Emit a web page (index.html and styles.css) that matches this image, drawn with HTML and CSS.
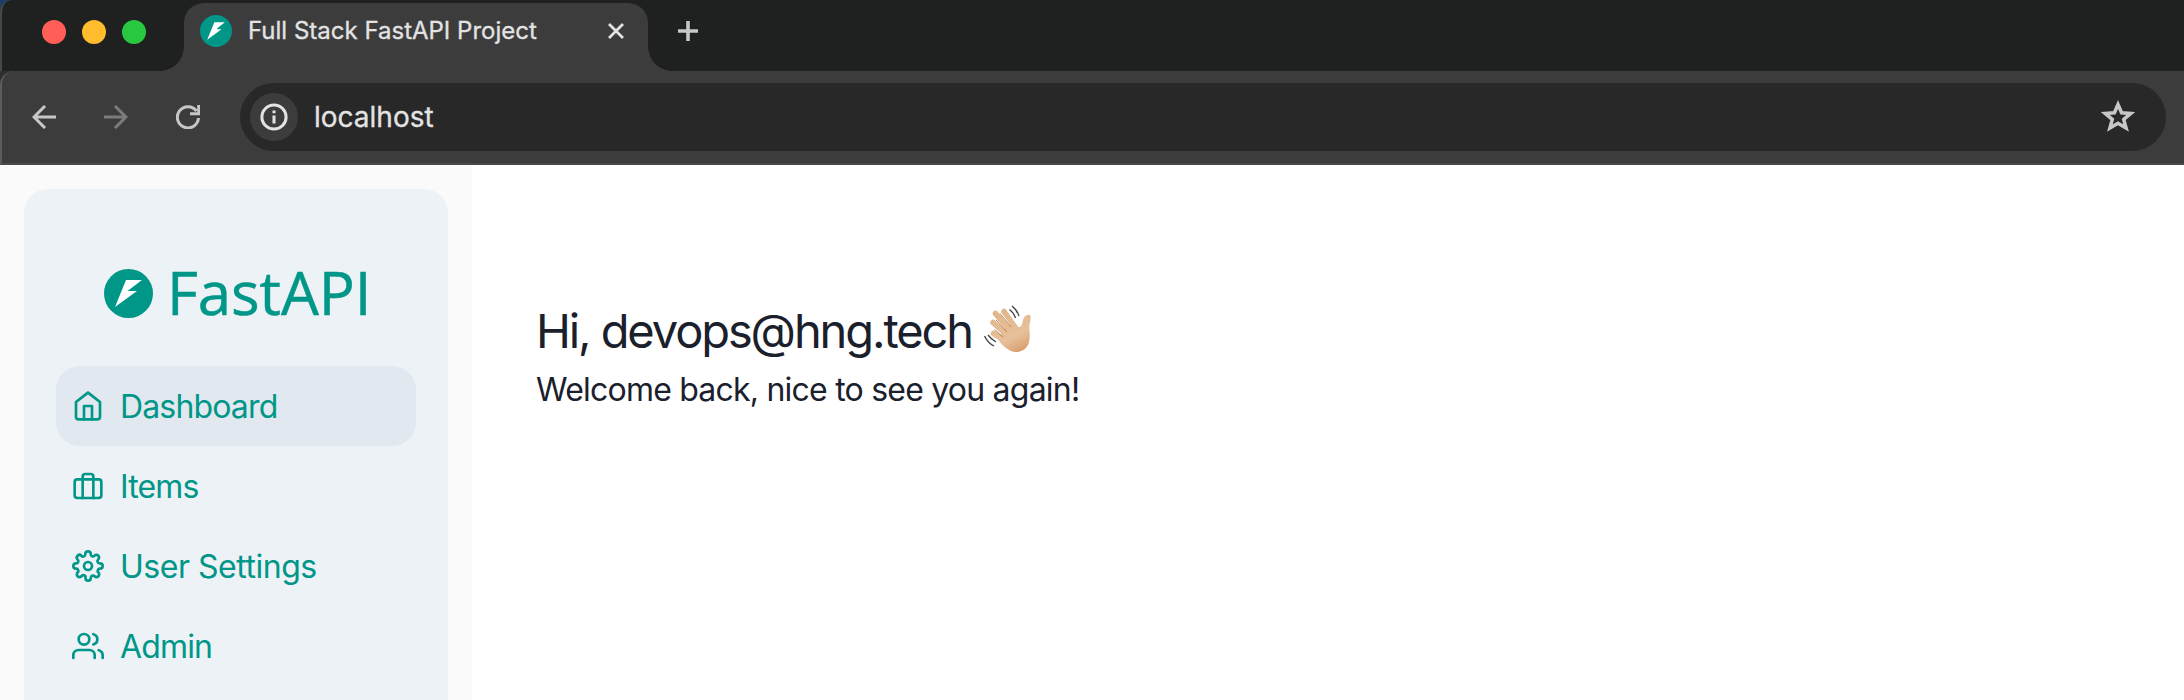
FILE: index.html
```html
<!DOCTYPE html>
<html lang="en">
<head>
<meta charset="utf-8">
<title>Full Stack FastAPI Project</title>
<link rel="stylesheet" href="styles.css">
</head>
<body>
<div class="window">
  <header class="tabstrip">
    <div class="lights"><span class="light red"></span><span class="light yellow"></span><span class="light green"></span></div>
    <div class="tab">
      <svg class="favicon" viewBox="0 0 49 49"><circle cx="24.5" cy="24.5" r="24.5" fill="#009688"/><path d="M22 11H38L27.500 19.500 26 22H33L11 38Z" fill="#fff"/></svg>
      <span class="tab-title">Full Stack FastAPI Project</span>
      <svg class="close" viewBox="0 0 16 16"><path d="M1 1 15 15M15 1 1 15"/></svg>
    </div>
    <svg class="plus" viewBox="0 0 20 20"><path d="M10 0V20M0 10H20"/></svg>
  </header>
  <div class="toolbar">
    <div class="nav-buttons">
      <svg class="ctl" viewBox="0 0 24 24"><path d="M24 12H2M13 1 2 12 13 23"/></svg>
      <svg class="ctl dim" viewBox="0 0 24 24"><path d="M0 12H22M11 1 22 12 11 23"/></svg>
      <svg class="ctl" viewBox="0 0 24 24"><path d="M22.5 13A10.6 10.6 0 1 1 20.5 6M22.7 0V8.7H14"/></svg>
    </div>
    <div class="urlbar">
      <span class="info"><svg viewBox="0 0 28 28"><circle cx="14" cy="14" r="12.1"/><path d="M14 12.5V20.5M14 7.5V10.3"/></svg></span>
      <span class="url">localhost</span>
      <svg class="star" viewBox="0 0 34 32"><path d="M17 4.5 20.6 12.8 29.8 13.4 22.7 19.4 25.1 28 17 23.2 8.9 28 11.3 19.4 4.2 13.4 13.4 12.8Z"/></svg>
    </div>
  </div>
  <div class="page">
    <aside class="sidebar">
      <div class="card">
        <div class="logo">
          <svg class="mark" viewBox="0 0 49 49"><circle cx="24.5" cy="24.5" r="24.5" fill="#009688"/><path d="M22 11H38L23.500 22H33L11 38Z" fill="#fff"/></svg>
          <span class="word">FastAPI</span>
        </div>
        <nav class="menu">
          <a class="item active"><svg viewBox="0 0 24 24"><path d="M3 9l9-7 9 7v11a2 2 0 0 1-2 2H5a2 2 0 0 1-2-2z"/><path d="M9 22V12h6v10"/></svg><span class="tight">Dashboard</span></a>
          <a class="item"><svg viewBox="0 0 24 24"><rect x="2" y="7" width="20" height="14" rx="2"/><path d="M16 21V5a2 2 0 0 0-2-2h-4a2 2 0 0 0-2 2v16"/></svg><span class="tight">Items</span></a>
          <a class="item"><svg viewBox="0 0 24 24"><circle cx="12" cy="12" r="3"/><path d="M19.4 15a1.65 1.65 0 0 0 .33 1.82l.06.06a2 2 0 1 1-2.83 2.83l-.06-.06a1.65 1.65 0 0 0-2.8 1.17V21a2 2 0 0 1-4 0v-.09A1.65 1.65 0 0 0 7.1 19.65l-.06.06a2 2 0 1 1-2.83-2.83l.06-.06A1.65 1.65 0 0 0 3.09 14H3a2 2 0 0 1 0-4h.09A1.65 1.65 0 0 0 4.27 7.18l-.06-.06a2 2 0 1 1 2.83-2.83l.06.06A1.65 1.65 0 0 0 10 3.09V3a2 2 0 0 1 4 0v.09a1.65 1.65 0 0 0 2.82 1.18l.06-.06a2 2 0 1 1 2.83 2.83l-.06.06A1.65 1.65 0 0 0 20.91 10H21a2 2 0 0 1 0 4h-.09a1.65 1.65 0 0 0-1.51 1z"/></svg><span>User Settings</span></a>
          <a class="item"><svg viewBox="0 0 24 24"><path d="M17 21v-2a4 4 0 0 0-4-4H5a4 4 0 0 0-4 4v2"/><circle cx="9" cy="7" r="4"/><path d="M23 21v-2a4 4 0 0 0-3-3.87M16 3.13a4 4 0 0 1 0 7.75"/></svg><span class="tight">Admin</span></a>
        </nav>
      </div>
    </aside>
    <main class="content">
      <h1 class="greeting"><span class="hello">Hi, devops@hng.tech</span>
        <svg class="wave" viewBox="0 0 48 48"><defs><linearGradient id="skin" gradientUnits="userSpaceOnUse" x1="14" y1="4" x2="36" y2="48"><stop offset="0" stop-color="#e0b588"/><stop offset=".65" stop-color="#e8c09a"/><stop offset="1" stop-color="#d79c6c"/></linearGradient></defs>
          <g stroke="url(#skin)" stroke-width="5.600" stroke-linecap="round" fill="none"><path d="M20 6.500 31 22M11.500 8.500 27 27M9 17.500 24 31M9.500 28.500 20 35"/></g>
          <path d="M13 33 27 18 33 21.500C36 23 38 21 38.500 17.500C39 13 42 9 45.500 10C48 11 46 16 45.500 20C45 25 47 33 44 40C40 47 32 49 25 45C20 42 16 38 13 33Z" fill="url(#skin)"/>
          <g stroke="#b98358" stroke-width="1" fill="none"><path d="M16 8.500 27 22M12 15 23 27M10.500 24.500 19 32"/></g>
          <g stroke="#3c4248" stroke-width="1.300" fill="none"><path d="M28 1Q33 5 35 11M25.500 4.500Q30 8 31.500 13M.5 31Q4 38 10 41M4 30Q7 34 12 37"/></g>
        </svg>
      </h1>
      <p class="welcome">Welcome back, nice to see you again!</p>
    </main>
  </div>
</div>
</body>
</html>
```
FILE: styles.css
```css
* { box-sizing: border-box; }
body { margin: 0; font-family: Inter, "Liberation Sans", sans-serif; background: #fff; }
svg { display: block; flex: none; }
.window { width: 2184px; height: 700px; overflow: hidden; display: flex; flex-direction: column; background: linear-gradient(#1d3f66 0, #1d3f66 12px, #2d2f2e 12px, #2d2f2e 100px, #fff 100px); }
.tabstrip { height: 71px; flex: none; background: #1f2120; display: flex; align-items: flex-start; border-left: 2px solid #454847; border-top-left-radius: 12px; }
.lights { display: flex; gap: 16px; padding: 20px 0 0 40px; width: 182px; }
.light { width: 24px; height: 24px; border-radius: 50%; }
.red { background: #ff5f57; }
.yellow { background: #febc2e; }
.green { background: #28c840; }
.tab { position: relative; width: 464px; height: 68px; margin-top: 3px; background: #3c3c3c; border-radius: 20px 20px 0 0; display: flex; align-items: flex-start; padding: 12px 24px 0 16px; }
.tab::before, .tab::after { content: ""; position: absolute; bottom: 0; width: 24px; height: 24px; }
.tab::before { right: 100%; background: radial-gradient(circle at 0 0, transparent 23.500px, #3c3c3c 24px); }
.tab::after { left: 100%; background: radial-gradient(circle at 100% 0, transparent 23.500px, #3c3c3c 24px); }
.favicon { width: 32px; height: 32px; }
.tab-title { flex: 1; margin-left: 16px; font-size: 24px; line-height: 32px; color: #e3e3e3; white-space: nowrap; -webkit-text-stroke: 0.300px #e3e3e3; }
.close { width: 16px; height: 16px; margin-top: 8px; stroke: #e3e3e3; stroke-width: 2.800; }
.plus { width: 20px; height: 20px; margin: 21px 0 0 30px; stroke: #c7c7c7; stroke-width: 3.600; }
.toolbar { height: 94px; flex: none; background: #3c3c3c; border-bottom: 2px solid #4a4848; border-left: 2px solid #5c5c5c; border-top-left-radius: 14px; display: flex; align-items: flex-start; padding: 12px 18px 0 30px; }
.nav-buttons { display: flex; gap: 48px; padding-top: 22px; width: 208px; }
.ctl { width: 24px; height: 24px; fill: none; stroke: #c7c7c7; stroke-width: 3; }
.dim { stroke: #7c7c7c; }
.urlbar { flex: 1; height: 68px; border-radius: 34px; background: #282828; display: flex; align-items: center; padding: 0 31px 0 10px; }
.info { width: 48px; height: 48px; border-radius: 50%; background: #3c3c3c; display: grid; place-items: center; }
.info svg { width: 28px; height: 28px; fill: none; stroke: #e3e3e3; stroke-width: 3; }
.url { flex: 1; margin-left: 16px; font-size: 28px; color: #e3e3e3; -webkit-text-stroke: 0.300px #e3e3e3; }
.star { width: 34px; height: 32px; margin-bottom: 3px; fill: none; stroke: #c7c7c7; stroke-width: 3.500; }
.page { flex: 1; display: flex; min-height: 0; background: #fff; }
.sidebar { width: 472px; background: #fafafa; padding: 24px 24px 0; }
.card { height: 600px; border-radius: 24px; background: #edf2f6; padding: 80px 32px 0; }
.logo { display: flex; align-items: flex-start; padding-left: 48px; height: 97px; }
.mark { width: 49px; height: 49px; }
.word { font-family: "Open Sans", sans-serif; font-size: 60px; line-height: 46px; letter-spacing: -0.100px; color: #009688; margin-left: 14px; white-space: nowrap; -webkit-text-stroke: 0.500px #009688; }
.menu { display: flex; flex-direction: column; }
.item { height: 80px; border-radius: 24px; padding: 0 16px; display: flex; align-items: center; gap: 16px; color: #009688; font-size: 32px; letter-spacing: -0.480px; }
.item svg { width: 32px; height: 32px; fill: none; stroke: #009688; stroke-width: 2; stroke-linecap: round; stroke-linejoin: round; }
.tight { letter-spacing: -0.850px; }
.active { background: #e2e8f0; }
.content { flex: 1; padding: 136px 64px 0; color: #1a202c; }
.greeting { margin: 0; height: 60px; display: flex; align-items: center; font-size: 48px; font-weight: 400; line-height: 60px; white-space: nowrap; }
.hello { font-size: 47px; letter-spacing: -2.100px; }
.wave { width: 48px; height: 48px; margin: 0 0 4px 12px; }
.welcome { margin: 5px 0 0; font-size: 32px; line-height: 48px; letter-spacing: -0.780px; white-space: nowrap; }
```
